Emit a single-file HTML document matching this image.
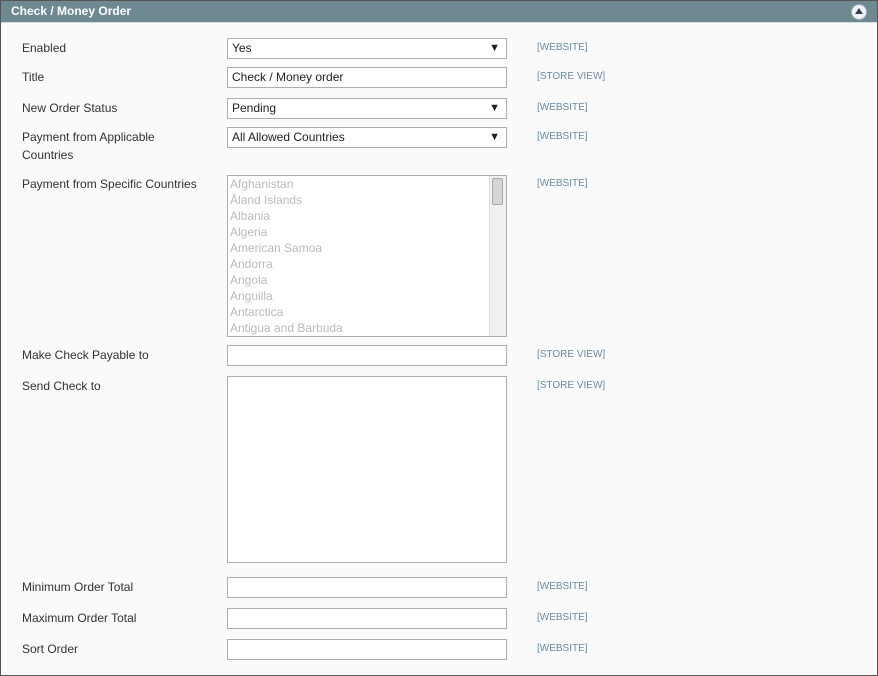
<html><head><style>
body{margin:0;width:878px;height:676px;overflow:hidden;font-family:"Liberation Sans",Arial,sans-serif;}
#f{position:absolute;left:0;top:0;width:876px;height:674px;border:1px solid #555;background:#fafafa;}
#h{position:absolute;left:0;top:0;width:876px;height:21px;background:#6f8992;border-bottom:1px solid #d0dade;color:#fff;font-weight:bold;font-size:12px;line-height:21px;}
#h span{position:absolute;left:10px;top:0}
.ic{position:absolute;left:851px;top:4px;width:14px;height:14px;border-radius:50%;background:#f0f3f4;box-shadow:0 0 0 1px #9fb0b6}
.ic:after{content:"";position:absolute;left:3px;top:3px;border-left:4px solid transparent;border-right:4px solid transparent;border-bottom:6px solid #2d4550}
.l{position:absolute;left:21px;font-size:12px;color:#333;line-height:18px}
.s{position:absolute;left:536px;font-size:10px;color:#6b8aa0}
.i{position:absolute;left:226px;width:278px;height:19px;border:1px solid #adadad;background:#fff;font-size:12px;line-height:19px;color:#222;box-sizing:content-box}
.i span{padding-left:4px}
.i.sel b{position:absolute;right:6px;top:0;font-size:11px;font-weight:normal}
#ms{position:absolute;left:226px;top:174px;width:278px;height:160px;border:1px solid #adadad;background:#fff;overflow:hidden}
#ms div{font-size:12px;color:#bbb;line-height:16px;padding-left:2px}
#sb{position:absolute;right:0;top:0;width:14px;height:160px;background:#f0f0f0;border-left:1px solid #ddd}
#sb i{position:absolute;left:2px;top:2px;width:9px;height:25px;background:#d6d6d6;border:1px solid #aaa;border-radius:2px}
</style></head><body><div id="f">
<div id="h"><span>Check / Money Order</span><div class="ic"></div></div>
<div class="l" style="top:38px">Enabled</div>
<div class="i sel" style="top:37px"><span>Yes</span><b>▼</b></div>
<div class="s" style="top:41px">[WEBSITE]</div>
<div class="l" style="top:67px">Title</div>
<div class="i" style="top:66px"><span>Check / Money order</span></div>
<div class="s" style="top:70px">[STORE VIEW]</div>
<div class="l" style="top:98px">New Order Status</div>
<div class="i sel" style="top:97px"><span>Pending</span><b>▼</b></div>
<div class="s" style="top:101px">[WEBSITE]</div>
<div class="l" style="top:127px">Payment from Applicable<br>Countries</div>
<div class="i sel" style="top:126px"><span>All Allowed Countries</span><b>▼</b></div>
<div class="s" style="top:130px">[WEBSITE]</div>
<div class="l" style="top:174px">Payment from Specific Countries</div>
<div id="ms"><div>Afghanistan</div><div>Åland Islands</div><div>Albania</div><div>Algeria</div><div>American Samoa</div><div>Andorra</div><div>Angola</div><div>Anguilla</div><div>Antarctica</div><div>Antigua and Barbuda</div><div id="sb"><i></i></div></div>
<div class="s" style="top:177px">[WEBSITE]</div>
<div class="l" style="top:345px">Make Check Payable to</div>
<div class="i" style="top:344px"></div>
<div class="s" style="top:348px">[STORE VIEW]</div>
<div class="l" style="top:376px">Send Check to</div>
<div class="i" style="top:375px;height:185px"></div>
<div class="s" style="top:379px">[STORE VIEW]</div>
<div class="l" style="top:577px">Minimum Order Total</div>
<div class="i" style="top:576px"></div>
<div class="s" style="top:580px">[WEBSITE]</div>
<div class="l" style="top:608px">Maximum Order Total</div>
<div class="i" style="top:607px"></div>
<div class="s" style="top:611px">[WEBSITE]</div>
<div class="l" style="top:639px">Sort Order</div>
<div class="i" style="top:638px"></div>
<div class="s" style="top:642px">[WEBSITE]</div>
</div></body></html>
